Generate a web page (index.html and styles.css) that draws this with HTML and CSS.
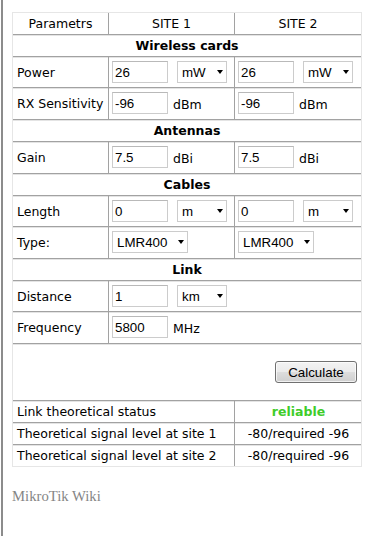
FILE: index.html
```html
<!DOCTYPE html>
<html lang="en">
<head>
    <meta charset="UTF-8">
    <meta name="viewport" content="width=device-width, initial-scale=1.0">
    <title>Link calculator</title>
    <link rel="stylesheet" href="styles.css">
</head>
<body>
<div class="page">
    <table class="calc">
        <colgroup>
            <col class="c1">
            <col class="c2">
            <col class="c3">
        </colgroup>
        <tr class="head">
            <td>Parametrs</td>
            <td>SITE 1</td>
            <td>SITE 2</td>
        </tr>
        <tr class="section"><td colspan="3">Wireless cards</td></tr>
        <tr class="field">
            <td class="label">Power</td>
            <td><div class="row"><input value="26"><span class="sel"><select><option>mW</option><option>dBm</option></select></span></div></td>
            <td><div class="row"><input value="26"><span class="sel"><select><option>mW</option><option>dBm</option></select></span></div></td>
        </tr>
        <tr class="field tall">
            <td class="label">RX Sensitivity</td>
            <td><div class="row"><input value="-96"><span class="unit">dBm</span></div></td>
            <td><div class="row"><input value="-96"><span class="unit">dBm</span></div></td>
        </tr>
        <tr class="section"><td colspan="3">Antennas</td></tr>
        <tr class="field tall">
            <td class="label">Gain</td>
            <td><div class="row"><input value="7.5"><span class="unit">dBi</span></div></td>
            <td><div class="row"><input value="7.5"><span class="unit">dBi</span></div></td>
        </tr>
        <tr class="section"><td colspan="3">Cables</td></tr>
        <tr class="field">
            <td class="label">Length</td>
            <td><div class="row"><input value="0"><span class="sel"><select><option>m</option><option>ft</option></select></span></div></td>
            <td><div class="row"><input value="0"><span class="sel"><select><option>m</option><option>ft</option></select></span></div></td>
        </tr>
        <tr class="field tall">
            <td class="label">Type:</td>
            <td><div class="row"><span class="sel wide"><select><option>LMR400</option><option>LMR200</option></select></span></div></td>
            <td><div class="row"><span class="sel wide"><select><option>LMR400</option><option>LMR200</option></select></span></div></td>
        </tr>
        <tr class="section"><td colspan="3">Link</td></tr>
        <tr class="field">
            <td class="label">Distance</td>
            <td colspan="2"><div class="row"><input value="1"><span class="sel"><select><option>km</option><option>mi</option></select></span></div></td>
        </tr>
        <tr class="field tall">
            <td class="label">Frequency</td>
            <td colspan="2"><div class="row"><input value="5800"><span class="unit">MHz</span></div></td>
        </tr>
        <tr class="action">
            <td colspan="3"><button>Calculate</button></td>
        </tr>
        <tr class="result">
            <td colspan="2">Link theoretical status</td>
            <td class="value ok">reliable</td>
        </tr>
        <tr class="result">
            <td colspan="2">Theoretical signal level at site 1</td>
            <td class="value">-80/required -96</td>
        </tr>
        <tr class="result">
            <td colspan="2">Theoretical signal level at site 2</td>
            <td class="value">-80/required -96</td>
        </tr>
    </table>

    <div class="footer">MikroTik Wiki</div>
</div>
</body>
</html>
```

FILE: styles.css
```css
:root {
    --line: #a2a2a2;
    --line-light: #e4e4e4;
    --field-border: #cccccc;
}
html, body {
    margin: 0;
    background: #fff;
}
body {
    font-family: "DejaVu Sans", Verdana, sans-serif;
    font-size: 12.5px;
    color: #000;
}
.page {
    margin-left: 1px;
    border-left: 2px solid #8c8c8c;
    min-height: 536px;
    box-sizing: border-box;
    padding: 12px 0 0 9px;
}
.calc {
    width: 350px;
    table-layout: fixed;
    border-collapse: separate;
    border-spacing: 0;
    border: 1px solid #e6e6e6;
}
.c1 { width: 95px; }
.c2 { width: 126px; }
.c3 { width: 127px; }
td {
    padding: 4px 3px;
    line-height: 13px;
    vertical-align: middle;
}
tr + tr > td {
    border-top: 1px solid var(--line);
    box-shadow: inset 0 1px 0 var(--line-light);
}
td + td {
    border-left: 1px solid var(--line);
}
.head td {
    text-align: center;
}
.section td {
    text-align: center;
    font-weight: bold;
}
.label {
    padding-left: 4px;
}
.field.tall td {
    padding-bottom: 5px;
}
.row {
    display: flex;
    align-items: center;
}
input {
    width: 56px;
    height: 22px;
    box-sizing: border-box;
    border: 1px solid var(--field-border);
    border-top-color: #b9b9b9;
    padding: 0 2px;
    margin: 0;
    font-family: "Liberation Sans", Arial, sans-serif;
    font-size: 13.33px;
    color: #000;
    background: #fff;
}
.unit {
    margin-left: 5px;
    padding-top: 2px;
}
.sel {
    position: relative;
    display: inline-block;
    margin-left: 9px;
}
.sel.wide {
    margin-left: 0;
}
.sel::after {
    content: "";
    position: absolute;
    right: 4px;
    top: 50%;
    margin-top: -2px;
    border-style: solid;
    border-width: 4px 3.5px 0;
    border-color: #000 transparent transparent;
    pointer-events: none;
}
select {
    -webkit-appearance: none;
    appearance: none;
    display: block;
    width: 50px;
    height: 22px;
    box-sizing: border-box;
    border: 1px solid var(--field-border);
    border-radius: 0;
    padding: 0 0 0 4px;
    margin: 0;
    background: #fff;
    font-family: "Liberation Sans", Arial, sans-serif;
    font-size: 13.33px;
    color: #000;
}
.sel.wide select {
    width: 76px;
}
.action td {
    padding: 17px 4px 17px;
    text-align: right;
}
button {
    width: 82px;
    height: 22px;
    border: 1px solid #707070;
    border-radius: 3px;
    background: linear-gradient(#f3f3f3 0%, #ebebeb 48%, #dddddd 52%, #cfcfcf 100%);
    box-shadow: inset 0 0 0 1px rgba(255,255,255,0.7);
    font-family: "Liberation Sans", Arial, sans-serif;
    font-size: 13.33px;
    color: #000;
    padding: 0;
    cursor: pointer;
}
.result td {
    padding-left: 4px;
}
.result .value {
    text-align: center;
}
.value.ok {
    color: #3fcc2a;
    font-weight: bold;
}
.footer {
    margin-top: 21px;
    font-family: "Liberation Serif", "Times New Roman", serif;
    font-size: 14.7px;
    color: #858585;
}
```
